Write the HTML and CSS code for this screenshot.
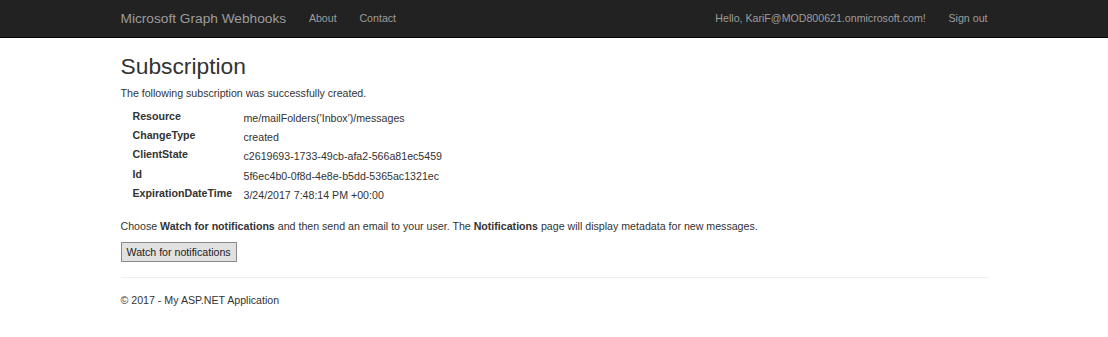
FILE: index.html
```html
<!DOCTYPE html>
<html>

<head>
    <title>Subscription - Microsoft Graph Webhooks</title>
    <link rel="stylesheet" href="styles.css">
</head>

<body>
    <div class="navbar">
        <div class="container navbar-inner">
            <div class="nav-left">
                <a class="brand" href="#">Microsoft Graph Webhooks</a>
                <a class="nav-link" href="#">About</a>
                <a class="nav-link" href="#">Contact</a>
            </div>
            <div class="nav-right">
                <span class="nav-link">Hello, KariF@MOD800621.onmicrosoft.com!</span>
                <a class="nav-link" href="#">Sign out</a>
            </div>
        </div>
    </div>

    <div class="container body-content">
        <h1>Subscription</h1>
        <p>The following subscription was successfully created.</p>
        <div class="details">
            <div class="label">Resource</div>
            <div class="value">me/mailFolders('Inbox')/messages</div>
            <div class="label">ChangeType</div>
            <div class="value">created</div>
            <div class="label">ClientState</div>
            <div class="value">c2619693-1733-49cb-afa2-566a81ec5459</div>
            <div class="label">Id</div>
            <div class="value">5f6ec4b0-0f8d-4e8e-b5dd-5365ac1321ec</div>
            <div class="label">ExpirationDateTime</div>
            <div class="value">3/24/2017 7:48:14 PM +00:00</div>
        </div>
        <p class="hint">Choose <b>Watch for notifications</b> and then send an email to your user. The <b>Notifications</b> page will display metadata for new messages.</p>
        <button class="watch-button" type="button">Watch for notifications</button>
        <hr>
        <footer>
            <p>&copy; 2017 - My ASP.NET Application</p>
        </footer>
    </div>
</body>

</html>
```

FILE: styles.css
```css
body {
    margin: 0;
    font-family: "Liberation Sans", Arial, sans-serif;
    font-size: 10.64px;
    line-height: 15.2px;
    color: #333;
    background-color: #fff;
}

.container {
    width: 867px;
    margin: 0 auto;
}

/* top bar */
.navbar {
    background-color: #222;
    border-bottom: 1px solid #080808;
    height: 37px;
}

.navbar-inner {
    display: flex;
    justify-content: space-between;
    align-items: center;
    height: 37px;
    padding-top: 1px;
    box-sizing: border-box;
}

.nav-left,
.nav-right {
    display: flex;
    align-items: center;
}

.nav-right {
    margin-right: -11.4px;
}

.brand {
    color: #9d9d9d;
    font-size: 13.7px;
    text-decoration: none;
    padding-right: 11.4px;
}

.nav-link {
    color: #9d9d9d;
    text-decoration: none;
    padding: 0 11.4px;
}

/* page body */
h1 {
    font-size: 22.8px;
    font-weight: normal;
    line-height: 25px;
    margin: 15.6px 0 7.6px;
}

p {
    margin: 0 0 7.6px;
}

.details {
    display: grid;
    grid-template-columns: 111px auto;
    padding-left: 12px;
}

.label {
    font-weight: bold;
    height: 19.2px;
}

.value {
    padding-top: 2px;
    height: 17.2px;
}

.hint {
    margin-top: 14px;
}

.watch-button {
    font-family: "Liberation Sans", Arial, sans-serif;
    font-size: 10.64px;
    color: #222;
    background-color: #e1e1e1;
    border: 1px solid #8a8a8a;
    border-radius: 0;
    padding: 2px 5px;
    margin: 0;
    height: 20px;
}

hr {
    border: 0;
    border-top: 1px solid #eee;
    margin: 15.2px 0;
}
```
